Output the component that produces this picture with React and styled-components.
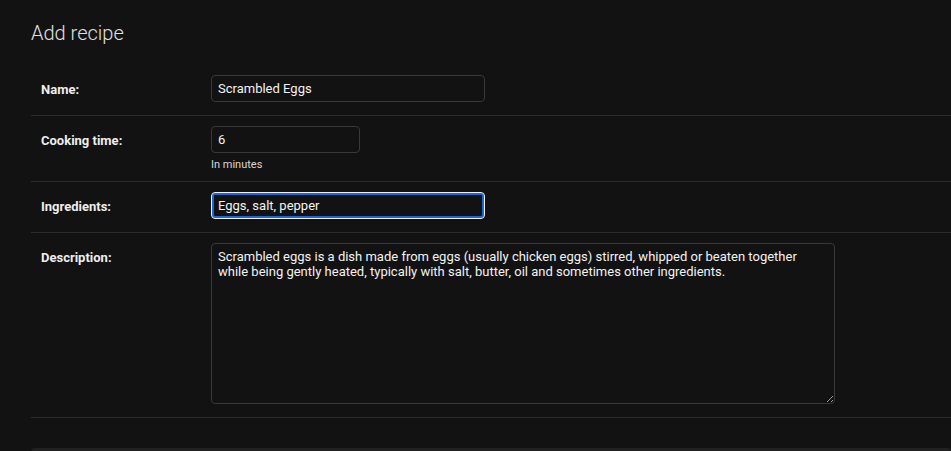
import React from 'react';
import styled, { createGlobalStyle } from 'styled-components';

const GlobalStyle = createGlobalStyle`
    html, body {
        margin: 0;
        background: #121212;
        color-scheme: dark;
    }
    body {
        font-family: Roboto, "Liberation Sans", sans-serif;
        font-size: 13px;
        color: #eeeeee;
    }
`;

function App() {
    return (
        <Page>
            <GlobalStyle />
            <Title>Add recipe</Title>

            <Fieldset>
                <FormRow>
                    <Label>Name:</Label>
                    <Field>
                        <TextInput defaultValue="Scrambled Eggs" $width={274} />
                    </Field>
                </FormRow>

                <FormRow>
                    <Label>Cooking time:</Label>
                    <Field>
                        <TextInput defaultValue="6" $width={149} />
                        <Help>In minutes</Help>
                    </Field>
                </FormRow>

                <FormRow>
                    <Label>Ingredients:</Label>
                    <Field>
                        <TextInput defaultValue="Eggs, salt, pepper" $width={274} $focused />
                    </Field>
                </FormRow>

                <FormRow>
                    <Label>Description:</Label>
                    <Field>
                        <TextArea
                            defaultValue="Scrambled eggs is a dish made from eggs (usually chicken eggs) stirred, whipped or beaten together while being gently heated, typically with salt, butter, oil and sometimes other ingredients."
                        />
                    </Field>
                </FormRow>
            </Fieldset>

            <SubmitRow />
        </Page>
    )
}

export default App

const Page = styled.div`
    padding: 21px 0 0 31px;
    height: 451px;
    box-sizing: border-box;
    overflow: hidden;
`;

const Title = styled.h1`
    margin: 0 0 20px;
    font-size: 20px;
    line-height: 24px;
    font-weight: 300;
    color: #e0e0e0;
`;

const Fieldset = styled.div`
    display: flex;
    flex-direction: column;
`;

const FormRow = styled.div`
    display: grid;
    grid-template-columns: 170px 1fr;
    padding: 10px;
    border-bottom: 1px solid #2c2c2c;
`;

const Label = styled.label`
    padding-top: 7px;
    line-height: 16px;
    font-weight: 700;
    color: #eeeeee;
`;

const Field = styled.div`
    display: flex;
    flex-direction: column;
    align-items: flex-start;
`;

const TextInput = styled.input`
    box-sizing: border-box;
    width: ${p => p.$width}px;
    height: 27px;
    margin: 0 0 3px;
    padding: 0 6px;
    font-family: inherit;
    font-size: 13px;
    color: #f2f2f2;
    background: #121212;
    border: 1px solid ${p => (p.$focused ? '#f0f0f0' : '#383838')};
    border-radius: 4px;
    box-shadow: ${p => (p.$focused ? 'inset 0 0 0 2px #1a68d6' : 'none')};
    outline: none;
`;

const Help = styled.div`
    margin-top: 2px;
    font-size: 11px;
    line-height: 13px;
    color: #d8d8d8;
`;

const TextArea = styled.textarea`
    box-sizing: border-box;
    width: 624px;
    height: 161px;
    margin: 0 0 3px;
    padding: 5px 6px;
    font-family: inherit;
    font-size: 13px;
    color: #f2f2f2;
    background: #121212;
    border: 1px solid #383838;
    border-radius: 4px;
    outline: none;
    display: block;
`;

const SubmitRow = styled.div`
    margin-top: 30px;
    height: 60px;
    background: #212121;
    border-radius: 4px;
`;
